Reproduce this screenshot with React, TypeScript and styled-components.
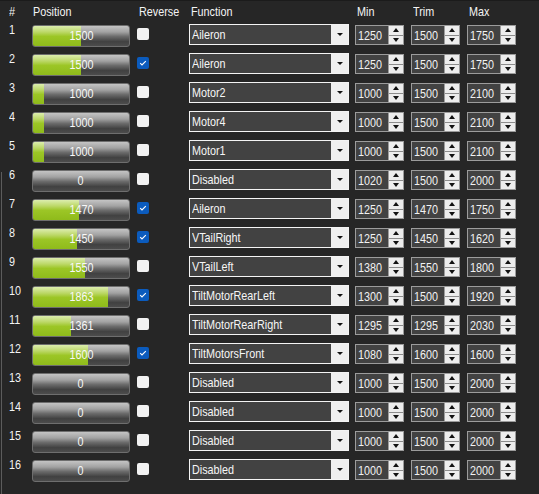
import React from 'react';
import styled, { createGlobalStyle } from 'styled-components';

const GlobalStyle = createGlobalStyle`
    html, body {
        margin: 0;
        padding: 0;
        background: #262626;
    }
    body {
        font-family: "Liberation Sans", Arial, sans-serif;
        font-size: 13px;
        color: #f4f4f4;
    }
`;

interface ChannelType {
    position: number;
    reverse: boolean;
    func: string;
    min: number;
    trim: number;
    max: number;
}

const channels: ChannelType[] = [
    {position: 1500, reverse: false, func: 'Aileron', min: 1250, trim: 1500, max: 1750},
    {position: 1500, reverse: true, func: 'Aileron', min: 1250, trim: 1500, max: 1750},
    {position: 1000, reverse: false, func: 'Motor2', min: 1000, trim: 1500, max: 2100},
    {position: 1000, reverse: false, func: 'Motor4', min: 1000, trim: 1500, max: 2100},
    {position: 1000, reverse: false, func: 'Motor1', min: 1000, trim: 1500, max: 2100},
    {position: 0, reverse: false, func: 'Disabled', min: 1020, trim: 1500, max: 2000},
    {position: 1470, reverse: true, func: 'Aileron', min: 1250, trim: 1470, max: 1750},
    {position: 1450, reverse: true, func: 'VTailRight', min: 1250, trim: 1450, max: 1620},
    {position: 1550, reverse: false, func: 'VTailLeft', min: 1380, trim: 1550, max: 1800},
    {position: 1863, reverse: true, func: 'TiltMotorRearLeft', min: 1300, trim: 1500, max: 1920},
    {position: 1361, reverse: false, func: 'TiltMotorRearRight', min: 1295, trim: 1295, max: 2030},
    {position: 1600, reverse: true, func: 'TiltMotorsFront', min: 1080, trim: 1600, max: 1600},
    {position: 0, reverse: false, func: 'Disabled', min: 1000, trim: 1500, max: 2000},
    {position: 0, reverse: false, func: 'Disabled', min: 1000, trim: 1500, max: 2000},
    {position: 0, reverse: false, func: 'Disabled', min: 1000, trim: 1500, max: 2000},
    {position: 0, reverse: false, func: 'Disabled', min: 1000, trim: 1500, max: 2000},
];

const COLUMNS = '23px 105px 52px 166px 56px 56px 49px';

const Page = styled.div`
    position: relative;
    width: 539px;
    height: 494px;
    box-sizing: border-box;
    border-top: 1px solid #1b1b1b;
    padding-left: 9px;
    overflow: hidden;
    &::before {
        content: '';
        position: absolute;
        left: 1px;
        top: 171px;
        bottom: 0;
        width: 1px;
        background: #5c5c5c;
    }
`;

// the UI font is a condensed sans; squeeze the text horizontally
const Narrow = styled.span<{ $center?: boolean }>`
    display: inline-block;
    white-space: nowrap;
    transform: scaleX(0.83);
    transform-origin: ${props => (props.$center ? 'center' : 'left')} center;
`;

const Header = styled.div`
    display: grid;
    grid-template-columns: ${COLUMNS};
    height: 23px;
    box-sizing: border-box;
    padding-top: 3px;
    line-height: 15px;
`;

const HeadCell = styled.div<{ $offset?: number }>`
    padding-left: ${props => props.$offset ?? 0}px;
    white-space: nowrap;
`;

const Row = styled.div`
    display: grid;
    grid-template-columns: ${COLUMNS};
    align-items: start;
    height: 29px;
`;

const Num = styled.div`
    line-height: 13px;
    margin-top: -1px;
`;

const Bar = {
    Wrapper: styled.div`
        position: relative;
        width: 98px;
        height: 22px;
        margin-top: 1px;
        box-sizing: border-box;
        border: 1px solid #6e6e6e;
        border-radius: 3px;
        overflow: hidden;
        background: linear-gradient(to bottom, #c4c4c4 0%, #a2a2a2 30%, #6c6c6c 52%, #414141 78%, #4c4c4c 100%);
    `,
    Fill: styled.div`
        height: 100%;
        background: linear-gradient(to bottom, #dcedae 0%, #bcd868 30%, #9cc626 52%, #8fbb1b 100%);
    `,
    Label: styled.div`
        position: absolute;
        inset: 0;
        text-align: center;
        line-height: 20px;
        color: #f8f8f8;
    `
};

const CheckBox = styled.div<{ $checked: boolean }>`
    width: 12px;
    height: 12px;
    margin-top: 4px;
    border-radius: 2px;
    background: ${props => (props.$checked ? '#0b5bbd' : '#f2f2f2')};
    display: flex;
    align-items: center;
    justify-content: center;
`;

const Select = {
    Wrapper: styled.div`
        display: flex;
        width: 160px;
        height: 21px;
        box-sizing: border-box;
        border: 1px solid #f4f4f4;
        background: #424242;
    `,
    Text: styled.div`
        flex: 1;
        padding: 1px 0 0 2px;
        line-height: 18px;
        color: #f6f6f6;
        overflow: hidden;
    `,
    Button: styled.div`
        width: 17px;
        background: #efefef;
        display: flex;
        align-items: center;
        justify-content: center;
    `
};

const Spin = {
    Wrapper: styled.div`
        display: flex;
        width: 49px;
        height: 20px;
        margin-top: 1px;
        box-sizing: border-box;
        border: 1px solid #9c9c9c;
        background: #424242;
    `,
    Text: styled.div`
        flex: 1;
        padding: 1px 0 0 2px;
        line-height: 17px;
        color: #f2f2f2;
    `,
    Buttons: styled.div`
        width: 14px;
        display: flex;
        flex-direction: column;
        gap: 1px;
        background: #8c8c8c;
        border-left: 1px solid #9c9c9c;
    `,
    Half: styled.div`
        flex: 1;
        background: #ededed;
        display: flex;
        align-items: center;
        justify-content: center;
    `
};

const Triangle = styled.div<{ $up?: boolean; $half: number; $height: number }>`
    width: 0;
    height: 0;
    border-left: ${props => props.$half}px solid transparent;
    border-right: ${props => props.$half}px solid transparent;
    ${props => props.$up
        ? `border-bottom: ${props.$height}px solid #111;`
        : `border-top: ${props.$height}px solid #111;`}
`;

const fillPercent = (v: number) => {
    if (v <= 0) return 0;
    return Math.max(0, Math.min(100, ((v - 850) / 1300) * 100));
};

const SpinBox: React.FC<{ value: number }> = ({value}) => (
    <Spin.Wrapper>
        <Spin.Text><Narrow>{value}</Narrow></Spin.Text>
        <Spin.Buttons>
            <Spin.Half><Triangle $up $half={3.5} $height={4}/></Spin.Half>
            <Spin.Half><Triangle $half={3.5} $height={4}/></Spin.Half>
        </Spin.Buttons>
    </Spin.Wrapper>
);

const Check = () => (
    <svg width="10" height="10" viewBox="0 0 10 10">
        <polyline points="2.2,5.2 4,7 7.8,3.2" fill="none" stroke="#ffffff" strokeWidth="1.1"/>
    </svg>
);

const headers: [string, number][] = [
    ['#', 0], ['Position', 1], ['Reverse', 2], ['Function', 2], ['Min', 2], ['Trim', 2], ['Max', 2],
];

const App: React.FC = () => {
    return (
        <Page>
            <GlobalStyle/>
            <Header>
                {headers.map(([label, offset]) => (
                    <HeadCell key={label} $offset={offset}><Narrow>{label}</Narrow></HeadCell>
                ))}
            </Header>
            {channels.map((ch, i) => (
                <Row key={i}>
                    <Num><Narrow>{i + 1}</Narrow></Num>
                    <Bar.Wrapper>
                        <Bar.Fill style={{width: `${fillPercent(ch.position)}%`}}/>
                        <Bar.Label><Narrow $center>{ch.position}</Narrow></Bar.Label>
                    </Bar.Wrapper>
                    <CheckBox $checked={ch.reverse}>{ch.reverse && <Check/>}</CheckBox>
                    <Select.Wrapper>
                        <Select.Text><Narrow>{ch.func}</Narrow></Select.Text>
                        <Select.Button><Triangle $half={3} $height={3}/></Select.Button>
                    </Select.Wrapper>
                    <SpinBox value={ch.min}/>
                    <SpinBox value={ch.trim}/>
                    <SpinBox value={ch.max}/>
                </Row>
            ))}
        </Page>
    );
};

export default App;
